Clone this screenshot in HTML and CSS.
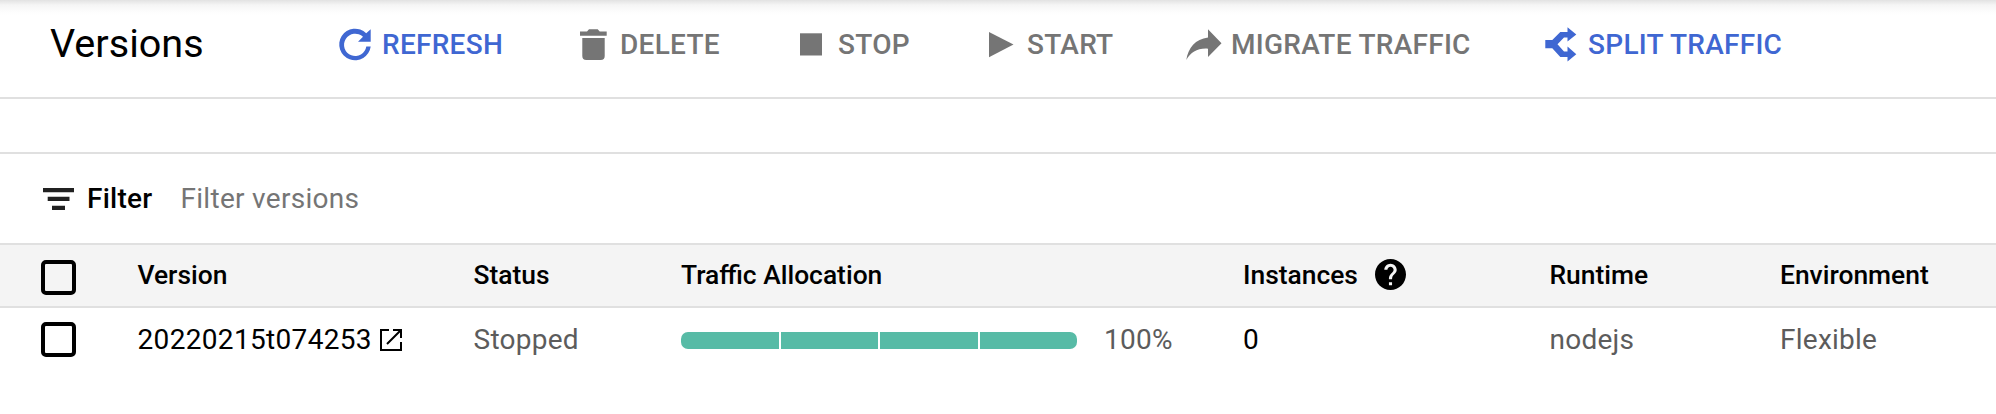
FILE: index.html
```html
<!DOCTYPE html>
<html lang="en">
<head>
<meta charset="utf-8">
<title>Versions</title>
<link rel="stylesheet" href="styles.css">
</head>
<body>
<header class="toolbar">
  <h1 class="title">Versions</h1>
  <nav class="actions">
    <a class="action active refresh"><svg class="icon" width="36" height="36" viewBox="0 0 36 36"><path d="M29.200 7.300L33.700 3.300V15.800H21L26 10.800A11.200 11.200 0 1 0 29.300 20.500H33.700A15.800 15.800 0 1 1 29.200 7.300Z"/></svg><span>REFRESH</span></a>
    <a class="action delete"><svg class="icon" width="36" height="36" viewBox="0 0 36 36"><path d="M4 5.500H11L13 3.300H21.700L23.700 5.500H30.700V9.700H4ZM6.300 12H28.700V30Q28.700 34 24.700 34H10.300Q6.300 34 6.300 30Z"/></svg><span>DELETE</span></a>
    <a class="action stop"><svg class="icon" width="36" height="36" viewBox="0 0 36 36"><path d="M4 7.300H26V29.500H4Z"/></svg><span>STOP</span></a>
    <a class="action start"><svg class="icon" width="36" height="36" viewBox="0 0 36 36"><path d="M3 6V31.300L27.500 18.500Z"/></svg><span>START</span></a>
    <a class="action migrate"><svg class="icon" width="36" height="36" viewBox="0 0 36 36"><path d="M23 3.300L36.500 17.300L23 31V22.700C12.500 22 6 26 1.300 34C3 22 10.500 13 23 11.500Z"/></svg><span>MIGRATE TRAFFIC</span></a>
    <a class="action active split"><svg class="icon" width="36" height="36" viewBox="0 0 36 36"><path d="M3.300 14H10.300L18.300 6H25.500V1.300L34.300 8.400L25.500 15.500V11.500H22L15.500 18.300L22 25.500H25.500V20.500L34.300 28.200L25.500 35.500V31H18.300L10.300 22.300H3.300Z"/></svg><span>SPLIT TRAFFIC</span></a>
  </nav>
</header>
<div class="spacer"></div>
<div class="filter">
  <svg class="filter-icon" width="31" height="22" viewBox="0 0 31 22"><path d="M0 0H31V4.300H0ZM4.700 8.800H26.500V13H4.700ZM9 17.700H22V22H9Z"/></svg>
  <span class="filter-label">Filter</span>
  <span class="filter-hint">Filter versions</span>
</div>
<div class="row head">
  <span class="check"></span>
  <span>Version</span>
  <span>Status</span>
  <span>Traffic Allocation</span>
  <span class="with-help">Instances<svg class="help" width="31" height="31" viewBox="2 2 20 20"><path d="M12 2C6.480 2 2 6.480 2 12s4.480 10 10 10 10-4.480 10-10S17.520 2 12 2zm1 17h-2v-2h2v2zm2.070-7.750l-.9.920C13.450 12.900 13 13.500 13 15h-2v-.5c0-1.100.45-2.100 1.170-2.830l1.240-1.260c.37-.36.59-.86.59-1.410 0-1.100-.9-2-2-2s-2 .9-2 2H8c0-2.210 1.790-4 4-4s4 1.790 4 4c0 .88-.36 1.680-.93 2.250z"/></svg></span>
  <span>Runtime</span>
  <span>Environment</span>
</div>
<div class="row body">
  <span class="check"></span>
  <span class="version"><span class="version-id">20220215t074253</span><svg class="open" width="22" height="22" viewBox="0 0 22 22"><path d="M9 1H1V21H21V13M13 1H21V9M21 1L7 15"/></svg></span>
  <span class="muted">Stopped</span>
  <span class="traffic muted"><span class="bar"><i></i><i></i><i></i><i></i></span><span>100%</span></span>
  <span class="count">0</span>
  <span class="muted">nodejs</span>
  <span class="muted">Flexible</span>
</div>
</body>
</html>
```

FILE: styles.css
```css
* { box-sizing: border-box; }
body {
  margin: 0;
  height: 414px;
  overflow: hidden;
  background: #fff;
  color: #000;
  font: 28px/32px Roboto, sans-serif;
  letter-spacing: .25px;
  white-space: nowrap;
}
.toolbar {
  display: grid;
  grid-template-columns: 287px 1fr;
  height: 99px;
  padding: 0 0 9px 50px;
  align-items: center;
  border-bottom: 2px solid #e0e0e0;
  background: linear-gradient(#e2e2e2, #f5f5f5 5px, #fdfdfd 12px, #fff 16px);
}
.title { margin: 0; padding-bottom: 1px; font-size: 39.6px; font-weight: 400; line-height: 48px; letter-spacing: 0; }
.actions {
  display: grid;
  grid-template-columns: 239px 220px 190px 199px 357px 1fr;
  align-items: center;
}
.action { display: flex; align-items: center; font-weight: 500; letter-spacing: .28px; color: #757575; }
.action span { padding-top: 2px; }
.active { color: #3f67d2; }
.icon { flex: none; margin-right: 9px; fill: currentColor; overflow: visible; }
.delete .icon { margin-right: 8px; }
.stop .icon { margin-right: 6px; }
.start .icon { margin-right: 5px; }
.migrate .icon, .split .icon { margin-right: 10px; }
.spacer { height: 55px; border-bottom: 2px solid #e0e0e0; }
.filter { display: flex; align-items: center; height: 89px; padding-left: 43px; }
.filter-icon { fill: #212121; }
.filter-label { margin-left: 13px; font-weight: 500; }
.filter-hint { margin-left: 28px; letter-spacing: .3px; color: #757575; }
.row {
  display: grid;
  grid-template-columns: 96.5px 336px 207.5px 562px 306.5px 230.500px 1fr;
  align-items: center;
  padding-left: 41px;
}
.head {
  height: 65px;
  padding-bottom: 2px;
  border-top: 2px solid #e0e0e0;
  border-bottom: 2px solid #e0e0e0;
  background: #f4f4f4;
  font-size: 26.4px;
  font-weight: 500;
  letter-spacing: 0;
}
.head .check { margin-top: 6px; }
.body { height: 63px; }
.check { width: 35px; height: 35px; border: 4px solid #000; border-radius: 5px; }
.with-help, .version, .traffic { display: flex; align-items: center; }
.version-id { letter-spacing: .33px; }
.help { margin-left: 17px; }
.open { margin-left: 8px; fill: none; stroke: #000; stroke-width: 2; }
.muted { color: #5c5c5c; }
.bar {
  display: grid;
  grid-template-columns: repeat(4, 1fr);
  gap: 2px;
  width: 396px;
  height: 17px;
  margin: 1px 27px 0 0;
  border-radius: 7px;
  overflow: hidden;
}
.bar i { background: #57bba6; }
```
